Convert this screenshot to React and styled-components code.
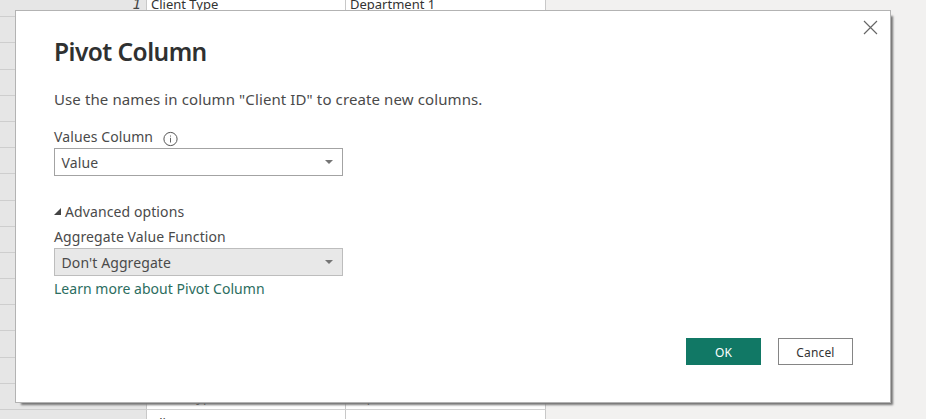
import React from 'react';
import styled, { createGlobalStyle } from 'styled-components';

const GlobalStyle = createGlobalStyle`
  *, *::before, *::after { box-sizing: border-box; }
  body { margin: 0; overflow: hidden; background: #f2f1f0; }
`;

const Screen = styled.div`
  position: relative;
  height: 419px;
  overflow: hidden;
  background: #f2f1f0;
  color: #4a4a4a;
  font-family: "Noto Sans", "Open Sans", sans-serif;
`;

const Sheet = styled.div`
  width: 546px;
  margin-top: -10px;
`;

const SheetRow = styled.div`
  display: grid;
  grid-template-columns: 147px 199px 200px;
  height: 26.2px;
`;

const RowNumber = styled.div`
  padding-right: 5px;
  border-top: 1px solid #cecece;
  border-right: 1px solid #c8c8c8;
  background: #e6e6e6;
  color: #444;
  font: italic 14px/26px "DejaVu Sans Mono", monospace;
  text-align: right;
`;

const Cell = styled.div`
  padding-left: 4px;
  border-top: 1px solid #d2d2d2;
  border-right: 1px solid #c8c8c8;
  background: #fff;
  color: #333;
  font-size: 13px;
  line-height: 26px;
  white-space: nowrap;
`;

const Dialog = styled.section`
  position: absolute;
  left: 15px;
  top: 10px;
  width: 876px;
  height: 393px;
  display: flex;
  flex-direction: column;
  padding: 25px 37px 37px 38px;
  border: 1px solid #b3b3b3;
  background: #fff;
  box-shadow: 4px 4px 2px -2px #747474;
`;

const CloseButton = styled.button`
  position: absolute;
  top: 9px;
  right: 12px;
  width: 15px;
  height: 15px;
  padding: 0;
  border: 0;
  background: none;
  svg { display: block; }
`;

const Title = styled.h1`
  margin: 0 0 21px;
  color: #2f3131;
  font-size: 24.5px;
  font-weight: 600;
  line-height: 32px;
  letter-spacing: -0.55px;
`;

const Description = styled.p`
  margin: 0 0 18px;
  font-size: 15px;
  line-height: 20px;
  letter-spacing: 0.11px;
`;

const FieldLabel = styled.label`
  display: flex;
  margin-bottom: 1px;
  font-size: 14px;
  line-height: 20px;
  letter-spacing: 0.1px;
  svg { margin: 4px 0 0 10px; }
`;

const SelectBox = styled.div`
  display: flex;
  align-items: center;
  justify-content: space-between;
  width: 289px;
  height: 28px;
  padding: 0 9px 0 6.5px;
  border: 1px solid ${({ $muted }) => ($muted ? '#bdbdbd' : '#a3a3a3')};
  background: ${({ $muted }) => ($muted ? '#e8e8e8' : '#fff')};
  font-size: 14px;
  line-height: 24px;
  letter-spacing: 0.1px;
  span { padding-top: 2px; }
`;

const AdvancedToggle = styled.div`
  display: flex;
  align-items: center;
  gap: 4px;
  margin: 26px 0 5px;
  font-size: 14px;
  line-height: 20px;
  letter-spacing: 0.1px;
  svg { margin-bottom: 1px; }
`;

const LearnLink = styled.a`
  margin-top: 3px;
  color: #2b6d60;
  font-size: 14px;
  line-height: 20px;
  letter-spacing: 0.03px;
`;

const Actions = styled.footer`
  display: flex;
  justify-content: flex-end;
  gap: 17px;
  margin-top: auto;
`;

const ActionButton = styled.button`
  width: 75px;
  height: 27px;
  padding: 2px 0 0;
  border: 1px solid ${({ $primary }) => ($primary ? '#117865' : '#858585')};
  background: ${({ $primary }) => ($primary ? '#117865' : '#fff')};
  color: ${({ $primary }) => ($primary ? '#fff' : '#333')};
  font: 12px/23px "Noto Sans", sans-serif;
  letter-spacing: 0.15px;
`;

const Caret = () => (
  <svg width="8" height="4" viewBox="0 0 8 4">
    <path d="M0 0H8L4 4Z" fill="#757575" />
  </svg>
);

const InfoIcon = () => (
  <svg width="15" height="16" viewBox="0 0 15 16">
    <circle cx="7.5" cy="8" r="6.6" fill="none" stroke="#555" />
    <path d="M7.5 6.8V11.5M7.5 4.5V5.6" stroke="#666" />
  </svg>
);

const Expander = () => (
  <svg width="7" height="7" viewBox="0 0 7 7">
    <path d="M7 0V7H0Z" fill="#444" />
  </svg>
);

// Rows covered by the dialog carry no text.
const rows = Array.from({ length: 17 }, (_, i) => ({
  number: i === 0 ? '1' : '',
  type: i === 0 || i >= 15 ? 'Client Type' : '',
  department: i === 0 || i === 15 ? 'Department 1' : '',
}));

export default function App() {
  return (
    <Screen>
      <GlobalStyle />
      <Sheet>
        {rows.map((row, i) => (
          <SheetRow key={i}>
            <RowNumber>{row.number}</RowNumber>
            <Cell>{row.type}</Cell>
            <Cell>{row.department}</Cell>
          </SheetRow>
        ))}
      </Sheet>
      <Dialog>
        <CloseButton aria-label="Close">
          <svg width="15" height="15" viewBox="0 0 15 15">
            <path d="M1 1L14 14M14 1L1 14" stroke="#666" strokeWidth="1.15" />
          </svg>
        </CloseButton>
        <Title>Pivot Column</Title>
        <Description>Use the names in column "Client ID" to create new columns.</Description>
        <FieldLabel>Values Column<InfoIcon /></FieldLabel>
        <SelectBox><span>Value</span><Caret /></SelectBox>
        <AdvancedToggle><Expander />Advanced options</AdvancedToggle>
        <FieldLabel>Aggregate Value Function</FieldLabel>
        <SelectBox $muted><span>Don't Aggregate</span><Caret /></SelectBox>
        <LearnLink>Learn more about Pivot Column</LearnLink>
        <Actions>
          <ActionButton $primary>OK</ActionButton>
          <ActionButton>Cancel</ActionButton>
        </Actions>
      </Dialog>
    </Screen>
  );
}
